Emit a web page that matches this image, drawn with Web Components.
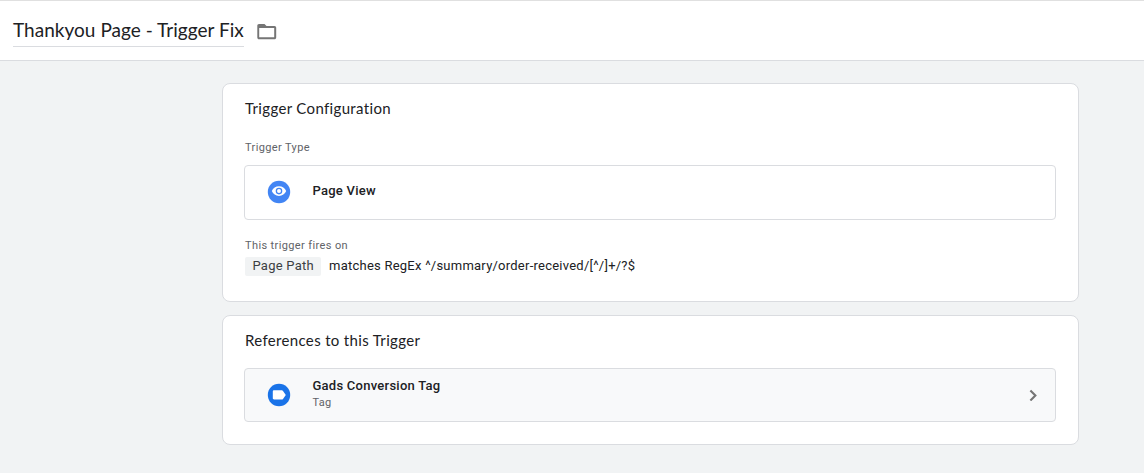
<!DOCTYPE html>
<html lang="en">
<head>
<meta charset="utf-8">
<title>Trigger</title>
<style>
html,body{margin:0;height:100%;background:#f1f3f4;overflow:hidden}
body{font-family:Roboto,"Liberation Sans",sans-serif;color:#202124}
</style>
</head>
<body>
<trigger-page></trigger-page>
<script>
const define = (name, html) => customElements.define(name, class extends HTMLElement {
  constructor() {
    super();
    const t = document.createElement('template');
    t.innerHTML = html;
    this.attachShadow({mode: 'open'}).append(t.content.cloneNode(true));
  }
});

define('folder-icon', `<style>:host{display:block;width:20px;height:16px}svg{display:block}</style>
<svg width="20" height="16" viewBox="0 0 20 16"><path fill="#757575" fill-rule="evenodd" d="M2 0h5.500l2 2H17.500c1 0 1.700.8 1.700 1.700v9.800c0 1-.8 1.800-1.700 1.800H2C1 15.300.3 14.500.3 13.500V1.800C.3.800 1 0 2 0zM2.200 4v9.300h15V4z"/></svg>`);

define('view-icon', `<style>:host{display:block;width:24px;height:24px}svg{display:block}</style>
<svg width="24" height="24" viewBox="0 0 24 24"><circle cx="12" cy="12" r="11.2" fill="#4285f4"/><path fill="#fff" fill-rule="evenodd" d="M12 6.2c-3.2 0-6 1.9-7.2 4.9 1.2 3 4 4.9 7.2 4.9s6-1.9 7.2-4.9C18 8.100 15.200 6.200 12 6.200zM12 14.400a3.300 3.300 0 1 1 0-6.600 3.300 3.300 0 0 1 0 6.600zM12 9.100a2 2 0 1 0 0 4 2 2 0 0 0 0-4z"/></svg>`);

define('tag-icon', `<style>:host{display:block;width:24px;height:24px}svg{display:block}</style>
<svg width="24" height="24" viewBox="0 0 24 24"><circle cx="12" cy="12" r="11.200" fill="#1a73e8"/><path fill="#fff" d="M7.100 7.300h7.700c.5 0 .9.200 1.200.600l2.800 4-2.800 4c-.3.400-.7.600-1.200.600H7.100c-.8 0-1.300-.5-1.300-1.200V8.600c0-.8.5-1.300 1.300-1.300z"/></svg>`);

define('chevron-icon', `<style>:host{display:block;width:10px;height:12px}svg{display:block}</style>
<svg width="10" height="12" viewBox="0 0 10 12"><path fill="none" stroke="#757575" stroke-width="2.100" d="M2.400 1.500l5 5-5 5"/></svg>`);

define('page-header', `<style>
:host{display:flex;box-sizing:border-box;height:61px;background:#fff;border-top:1px solid #e0e0e0;border-bottom:1px solid #dadce0;padding:17px 0 0 13px;align-items:flex-start}
.name{box-sizing:border-box;width:231px;height:29px;border-bottom:1px solid #dadce0;font:400 19px/24px Lato,sans-serif;white-space:nowrap;letter-spacing:.03px}
folder-icon{margin:6px 0 0 13px}
</style><div class="name"><slot></slot></div><folder-icon></folder-icon>`);

define('config-card', `<style>
:host{display:block;box-sizing:border-box;width:857px;background:#fff;border:1px solid #dadce0;border-radius:8px;padding:14px 22px 22px 21px}
h2{margin:0 0 0 1px;padding-bottom:1px;font:400 15px/20px Lato,sans-serif;letter-spacing:.34px}
</style><h2><slot name="title"></slot></h2><slot></slot>`);

define('field-label', `<style>
:host{display:block;margin-left:1px;font-size:11px;line-height:16px;letter-spacing:.38px;color:#5f6368}
</style><slot></slot>`);

define('item-row', `<style>
:host{display:flex;box-sizing:border-box;height:55px;align-items:center;border:1px solid #dadce0;border-radius:4px;background:var(--row-bg,#fff);padding:0 17px var(--lift,0) 22px}
.text{flex:1;margin-left:21.500px;padding-bottom:3px}
.name{font-weight:500;font-size:13px;line-height:18px;letter-spacing:.25px}
.sub{display:block;font-size:11px;line-height:15px;letter-spacing:.3px;color:#5f6368}
</style><slot name="icon"></slot><div class="text"><div class="name"><slot></slot></div><slot class="sub" name="sub"></slot></div><slot name="end"></slot>`);

define('filter-line', `<style>
:host{display:flex;align-items:center;margin:3px 0 0 1px;height:19px;font-size:13px;letter-spacing:.24px;white-space:nowrap}
.chip{box-sizing:border-box;width:76px;height:19px;line-height:18px;padding-left:7.500px;background:#f1f3f4;border-radius:2px;color:#3c4043;margin-right:8px}
.rule{line-height:18px;height:19px}
</style><span class="chip"><slot name="variable"></slot></span><span class="rule"><slot></slot></span>`);

define('trigger-page', `<style>
:host{display:block}
main{display:flex;flex-direction:column;gap:13px;padding:22px 0 0 222px}
.one{height:219px}.two{height:130px}
.one field-label{margin-top:21px}
.one item-row{margin-top:9px;--lift:1px}
.one .fires{margin-top:18px}
.two item-row{height:54px;margin-top:17px;--row-bg:#f8f9fa}
</style>
<page-header>Thankyou Page - Trigger Fix</page-header>
<main>
<config-card class="one"><span slot="title">Trigger Configuration</span>
<field-label>Trigger Type</field-label>
<item-row><view-icon slot="icon"></view-icon>Page View</item-row>
<field-label class="fires">This trigger fires on</field-label>
<filter-line><span slot="variable">Page Path</span>matches RegEx ^/summary/order-received/[^/]+/?$</filter-line>
</config-card>
<config-card class="two"><span slot="title">References to this Trigger</span>
<item-row><tag-icon slot="icon"></tag-icon>Gads Conversion Tag<span slot="sub">Tag</span><chevron-icon slot="end"></chevron-icon></item-row>
</config-card>
</main>`);
</script>
</body>
</html>
